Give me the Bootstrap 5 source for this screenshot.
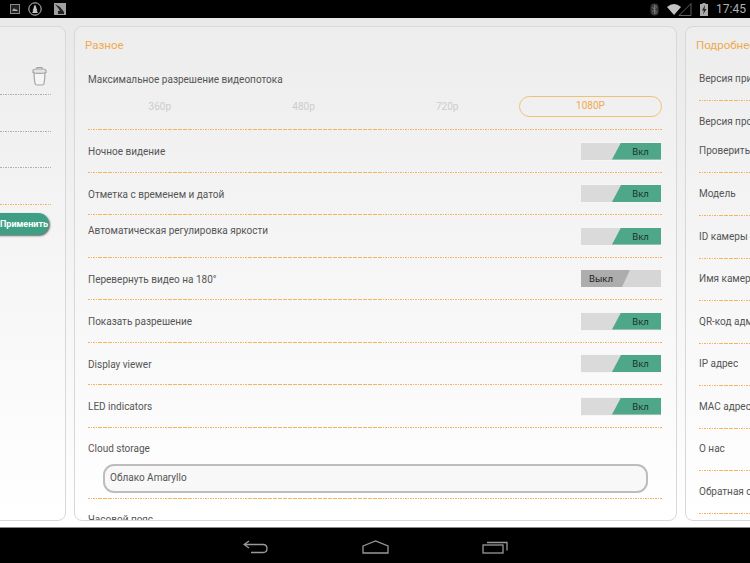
<!DOCTYPE html>
<html lang="ru">
<head>
<meta charset="utf-8">
<link href="https://cdn.jsdelivr.net/npm/bootstrap@5.3.0/dist/css/bootstrap.min.css" rel="stylesheet">
<style>
html,body{height:100%;}
body{width:750px;height:563px;overflow:hidden;background:#000;font-family:Roboto,"Noto Sans",sans-serif;color:#555;font-size:10px;}
.sysbar{height:18px;background:#000;padding:0 4px 0 10px;color:#a6a6a6;}
.navbar-bottom{height:35px;background:#000;gap:93px;padding-top:2px;}
.stage{height:510px;background:linear-gradient(#e9e9e9,#fff);gap:8px;padding:8px 0 7px;overflow:hidden;border-bottom:1px solid #888;}
.pane{flex:none;height:495px;border:1px solid #d8d8d8;border-radius:8px;background:linear-gradient(#ededed,#fff);overflow:hidden;}
.pane-left{width:114px;margin-left:-48px;position:relative;}
.pane-mid{width:603px;padding:0 14px 0 13px;}
.pane-right{width:300px;padding:0 0 0 13px;}
.pane-title{color:#f0aa4e;font-size:11.5px;height:38px;padding:11px 0 0;margin-left:-3px;line-height:14px;}
.dots{background:repeating-linear-gradient(90deg,#f2b45f 0 1.5px,transparent 1.5px 2.5px) left bottom/100% 1px no-repeat;}
.line-item{white-space:nowrap;line-height:14px;}
.line-item.center{display:flex;align-items:center;justify-content:space-between;padding-bottom:1px;}
.line-item.center>span{padding-top:2px;}
.line-item.center>span.raised{padding-top:0;margin-top:-10px;}
.h43{height:43px;}
.h42{height:42px;}
.res-row{height:65px;}
.res-row .lab{height:27px;padding-top:8px;}
.res-opts{display:flex;height:21px;margin-top:4px;align-items:center;color:#ccc;text-align:center;}
.res-opts>div{flex:1;}
.res-opts .res-on{flex:none;width:143px;height:21px;line-height:18px;border:1.5px solid #f0c078;border-radius:11px;color:#f0aa4e;}
.toggle-box{width:80px;height:17px;margin-right:1px;background:#dadada;position:relative;flex:none;box-shadow:0 -1px 0 #f6f6f6,0 1px 0 #f6f6f6;color:#1c352c;font-size:9.5px;line-height:17px;}
.toggle-fill{position:absolute;top:0;bottom:0;right:0;width:49px;background:#4fa78a;clip-path:polygon(9px 0,100% 0,100% 100%,0 100%);text-align:center;padding-left:8px;}
.toggle-box.is-off{background:#d6d6d6;}
.toggle-fill.off{right:auto;left:0;width:49px;background:#adadad;clip-path:polygon(0 0,100% 0,calc(100% - 8px) 100%,0 100%);padding:0 9px 0 0;color:#222;}
.cloud-row{height:71px;padding-top:14px;}
.cloud-input{margin:8px 14px 0 15px;height:29px;border:2.5px solid #bdbdbd;border-radius:11px;line-height:24px;padding-left:5px;background:#f8f8f8;}
.clip-label{padding-top:14px;line-height:14px;}
.trash{position:absolute;top:39px;right:18px;}
.left-sep{position:absolute;left:0;width:98px;height:1px;background:repeating-linear-gradient(90deg,#b0b0b0 0 1.5px,transparent 1.5px 2.5px);}
.left-sep.orange{background:repeating-linear-gradient(90deg,#f2b45f 0 1.5px,transparent 1.5px 2.5px);}
.apply-btn{position:absolute;left:33px;top:186px;width:63px;height:22px;border-radius:11px;background:#3f9f85;color:#fff;font-size:9px;font-weight:700;line-height:22px;padding-left:14px;box-shadow:1px 1px 2px #666;white-space:nowrap;}
.r-item{white-space:nowrap;line-height:14px;display:flex;align-items:flex-end;padding-bottom:15px;}
.r-item.bare{padding-bottom:1px;}
.clock{font-size:12px;color:#b0b0b0;}
</style>
</head>
<body>
<div class="sysbar d-flex align-items-center justify-content-between">
 <div class="d-flex align-items-center gap-2">
  <svg width="10" height="10" viewBox="0 0 10 10"><rect width="10" height="10" fill="#8a8a8a"/><rect x="1" y="1" width="8" height="8" fill="#222"/><path d="M2 7 4 4l1 1.500L6 5l2 2z" fill="#aaa"/></svg>
  <svg width="14" height="14" viewBox="0 0 14 14"><circle cx="7" cy="7" r="6.200" fill="none" stroke="#c4c4c4"/><path d="M7 2.500 8.500 5.500H8l1.500 3h-1L10 11H4l1.500-2.500h-1l1.500-3h-.5z" fill="#c4c4c4"/></svg>
  <svg width="12" height="12" viewBox="0 0 12 12" class="ms-1"><rect width="12" height="12" fill="#a0a0a0"/><path d="M1 1l5 3 4 5v2H4V8l2-.5z" fill="#222"/></svg>
 </div>
 <div class="d-flex align-items-center gap-1">
  <svg width="9" height="13" viewBox="0 0 9 13"><rect x=".5" y=".5" width="8" height="12" rx="4" fill="#3a3a3a"/><path d="M2.500 4l4 5-2 2V2l2 2-4 5" fill="none" stroke="#808080" stroke-width=".8"/></svg>
  <svg width="25" height="13" viewBox="0 0 25 13" class="ms-1"><path d="M0 4Q7-2 14 4L7 12z" fill="#c4c4c4"/><path d="M12 12.500 24 .5v12z" fill="none" stroke="#777" stroke-width=".8"/></svg>
  <svg width="8" height="13" viewBox="0 0 8 13" class="ms-1"><path d="M2.500 0h3v1H8v12H0V1h2.500z" fill="#aaa"/><path d="M5 2 2 7.500h2L3 11.500 6.500 6H4.500z" fill="#222"/></svg>
  <span class="clock ms-1">17:45</span>
 </div>
</div>
<div class="stage d-flex">
 <div class="pane pane-left">
  <svg class="trash" width="15" height="20" viewBox="0 0 15 20" fill="none" stroke="#a4a4a4" stroke-width="1.200"><path d="M2 6c0 5 .5 9 1 11.500Q3.300 19 5 19h5q1.700 0 2-1.500c.5-2.500 1-6.500 1-11.500" fill="#f5f5f5"/><path d="M1 6.500V4.500Q1 3.300 4.500 3h6Q14 3.300 14 4.500v2c-3 1.200-10 1.200-13 0z" fill="#e4e4e4"/><path d="M5 3V1.500h5V3"/></svg>
  <div class="left-sep" style="top:67px"></div>
  <div class="left-sep" style="top:104px"></div>
  <div class="left-sep" style="top:140px"></div>
  <div class="left-sep orange" style="top:177px"></div>
  <div class="apply-btn">Применить</div>
 </div>
 <div class="pane pane-mid">
  <div class="pane-title">Разное</div>
  <div class="line-item res-row dots"><div class="lab">Максимальное разрешение видеопотока</div>
   <div class="res-opts"><div>360p</div><div>480p</div><div>720p</div><div class="res-on">1080P</div></div></div>
  <div class="line-item center dots h43"><span>Ночное видение</span><div class="toggle-box"><div class="toggle-fill">Вкл</div></div></div>
  <div class="line-item center dots h42"><span>Отметка с временем и датой</span><div class="toggle-box"><div class="toggle-fill">Вкл</div></div></div>
  <div class="line-item center dots h43"><span class="raised">Автоматическая регулировка яркости</span><div class="toggle-box"><div class="toggle-fill">Вкл</div></div></div>
  <div class="line-item center dots h42"><span>Перевернуть видео на 180°</span><div class="toggle-box is-off"><div class="toggle-fill off">Выкл</div></div></div>
  <div class="line-item center dots h43"><span>Показать разрешение</span><div class="toggle-box"><div class="toggle-fill">Вкл</div></div></div>
  <div class="line-item center dots h42"><span>Display viewer</span><div class="toggle-box"><div class="toggle-fill">Вкл</div></div></div>
  <div class="line-item center dots h43"><span>LED indicators</span><div class="toggle-box"><div class="toggle-fill">Вкл</div></div></div>
  <div class="line-item cloud-row dots"><div>Cloud storage</div><div class="cloud-input">Облако Amaryllo</div></div>
  <div class="clip-label">Часовой пояс</div>
 </div>
 <div class="pane pane-right">
  <div class="pane-title">Подробнее</div>
  <div class="r-item dots" style="height:36px">Версия приложения</div>
  <div class="r-item bare" style="height:29px">Версия прошивки</div>
  <div class="r-item dots h43">Проверить</div>
  <div class="r-item dots h43">Модель</div>
  <div class="r-item dots h43">ID камеры</div>
  <div class="r-item dots h42">Имя камеры</div>
  <div class="r-item dots h43">QR-код админа</div>
  <div class="r-item dots h42">IP адрес</div>
  <div class="r-item dots h43">MAC адрес</div>
  <div class="r-item dots h42">О нас</div>
  <div class="r-item dots h43">Обратная связь</div>
 </div>
</div>
<div class="navbar-bottom d-flex align-items-center justify-content-center">
 <svg width="26" height="14" viewBox="0 0 26 14" fill="none" stroke="#999" stroke-width="1.300"><path d="M6 1 1 4.500 6 8M1 4.500h19q4 0 4 4t-4 4H8"/></svg>
 <svg width="27" height="14" viewBox="0 0 27 14" fill="none" stroke="#999" stroke-width="1.300"><path d="M1 6 13.500 1 26 6v7H1z"/></svg>
 <svg width="26" height="14" viewBox="0 0 26 14" fill="none" stroke="#999" stroke-width="1.300"><rect x="1" y="5" width="20" height="8"/><path d="M5 2.500h20v8"/></svg>
</div>
<script src="https://cdn.jsdelivr.net/npm/bootstrap@5.3.0/dist/js/bootstrap.bundle.min.js"></script>
</body>
</html>
